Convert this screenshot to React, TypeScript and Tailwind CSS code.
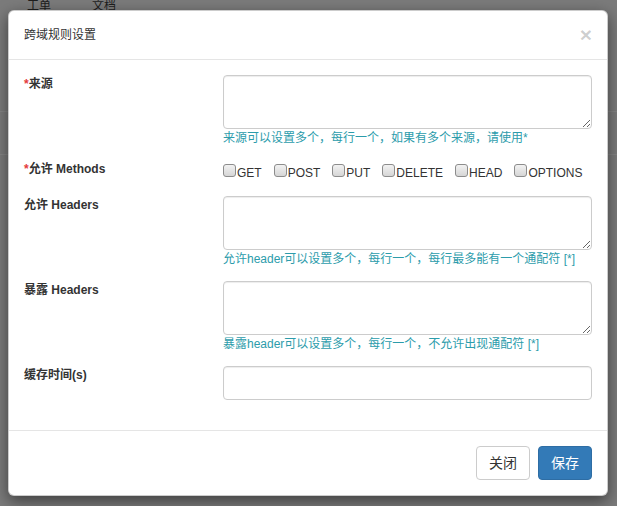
import { useState } from "react";

const methods = ["GET", "POST", "PUT", "DELETE", "HEAD", "OPTIONS"] as const;

const fontStack = "font-['Liberation_Sans','Noto_Sans_CJK_SC',sans-serif]";

function Label({ text, required }: { text: string; required?: boolean }) {
  return (
    <div className="pt-px text-[12px] font-bold leading-[16px] text-[#333]">
      {required && <span className="text-[#e4393c]">*</span>}
      {text}
    </div>
  );
}

function Help({ children }: { children: string }) {
  return <p className="mt-px text-[12px] leading-[16px] text-[#2c9cab]">{children}</p>;
}

function Area() {
  return (
    <textarea className="block h-[54px] w-full rounded-[4px] border border-[#ccc] bg-white px-3 py-1.5 text-[12px] text-[#555] shadow-[inset_0_1px_1px_rgba(0,0,0,0.075)] outline-none" />
  );
}

function MethodBox({ name }: { name: string }) {
  const [checked, setChecked] = useState(false);
  return (
    <label className="flex cursor-pointer items-baseline" onClick={() => setChecked(!checked)}>
      <span
        className={`inline-block h-[13px] w-[13px] rounded-[3px] border border-[#8c8c8c] bg-gradient-to-b from-[#f2f2f2] to-[#d6d6d6] ${
          checked ? "ring-1 ring-[#337ab7]" : ""
        }`}
      />
      <span className="ml-px text-[12px] leading-[16px] text-[#333]">{name}</span>
    </label>
  );
}

export default function App() {
  return (
    <div className={`relative h-[506px] w-[617px] overflow-hidden bg-[#7b7b7b] ${fontStack}`}>
      {/* page behind the backdrop */}
      <div className="flex h-[27px] gap-[41px] pl-[27px] text-[12px] leading-[12px] text-[#1e1e1e]">
        <span>工单</span>
        <span>文档</span>
      </div>
      <div className="mt-[84px] h-[44px] border-t border-b border-[#858585]" />

      <div className="absolute left-[8px] top-[10px] w-[600px] rounded-[6px] border border-black/20 bg-white shadow-[0_5px_15px_rgba(0,0,0,0.5)]">
        <div className="flex items-center justify-between border-b border-[#e5e5e5] px-[15px] py-[15px]">
          <h4 className="text-[12px] leading-[18px] text-[#333]">跨域规则设置</h4>
          <button className="text-[21px] font-bold leading-[18px] text-black/20">×</button>
        </div>

        <div className="grid grid-cols-[199px_1fr] px-[15px] pt-[15px] pb-[15px]">
          <Label text="来源" required />
          <div className="mb-[14px]">
            <Area />
            <Help>来源可以设置多个，每行一个，如果有多个来源，请使用*</Help>
          </div>

          <Label text="允许 Methods" required />
          <div className="mb-[15px] flex h-[21px] gap-[12px] pt-[4px]">
            {methods.map((m) => (
              <MethodBox key={m} name={m} />
            ))}
          </div>

          <Label text="允许 Headers" />
          <div className="mb-[14px]">
            <Area />
            <Help>允许header可以设置多个，每行一个，每行最多能有一个通配符 [*]</Help>
          </div>

          <Label text="暴露 Headers" />
          <div className="mb-[14px]">
            <Area />
            <Help>暴露header可以设置多个，每行一个，不允许出现通配符 [*]</Help>
          </div>

          <Label text="缓存时间(s)" />
          <div className="mb-[15px]">
            <input className="block h-[34px] w-full rounded-[4px] border border-[#ccc] bg-white px-3 text-[12px] text-[#555] shadow-[inset_0_1px_1px_rgba(0,0,0,0.075)] outline-none" />
          </div>
        </div>

        <div className="flex justify-end gap-[8px] border-t border-[#e5e5e5] p-[15px]">
          <button className="h-[34px] rounded-[4px] border border-[#ccc] bg-white px-3 text-[14px] leading-[20px] text-[#333]">
            关闭
          </button>
          <button className="h-[34px] rounded-[4px] border border-[#2e6da4] bg-[#337ab7] px-3 text-[14px] leading-[20px] text-white">
            保存
          </button>
        </div>
      </div>
    </div>
  );
}
